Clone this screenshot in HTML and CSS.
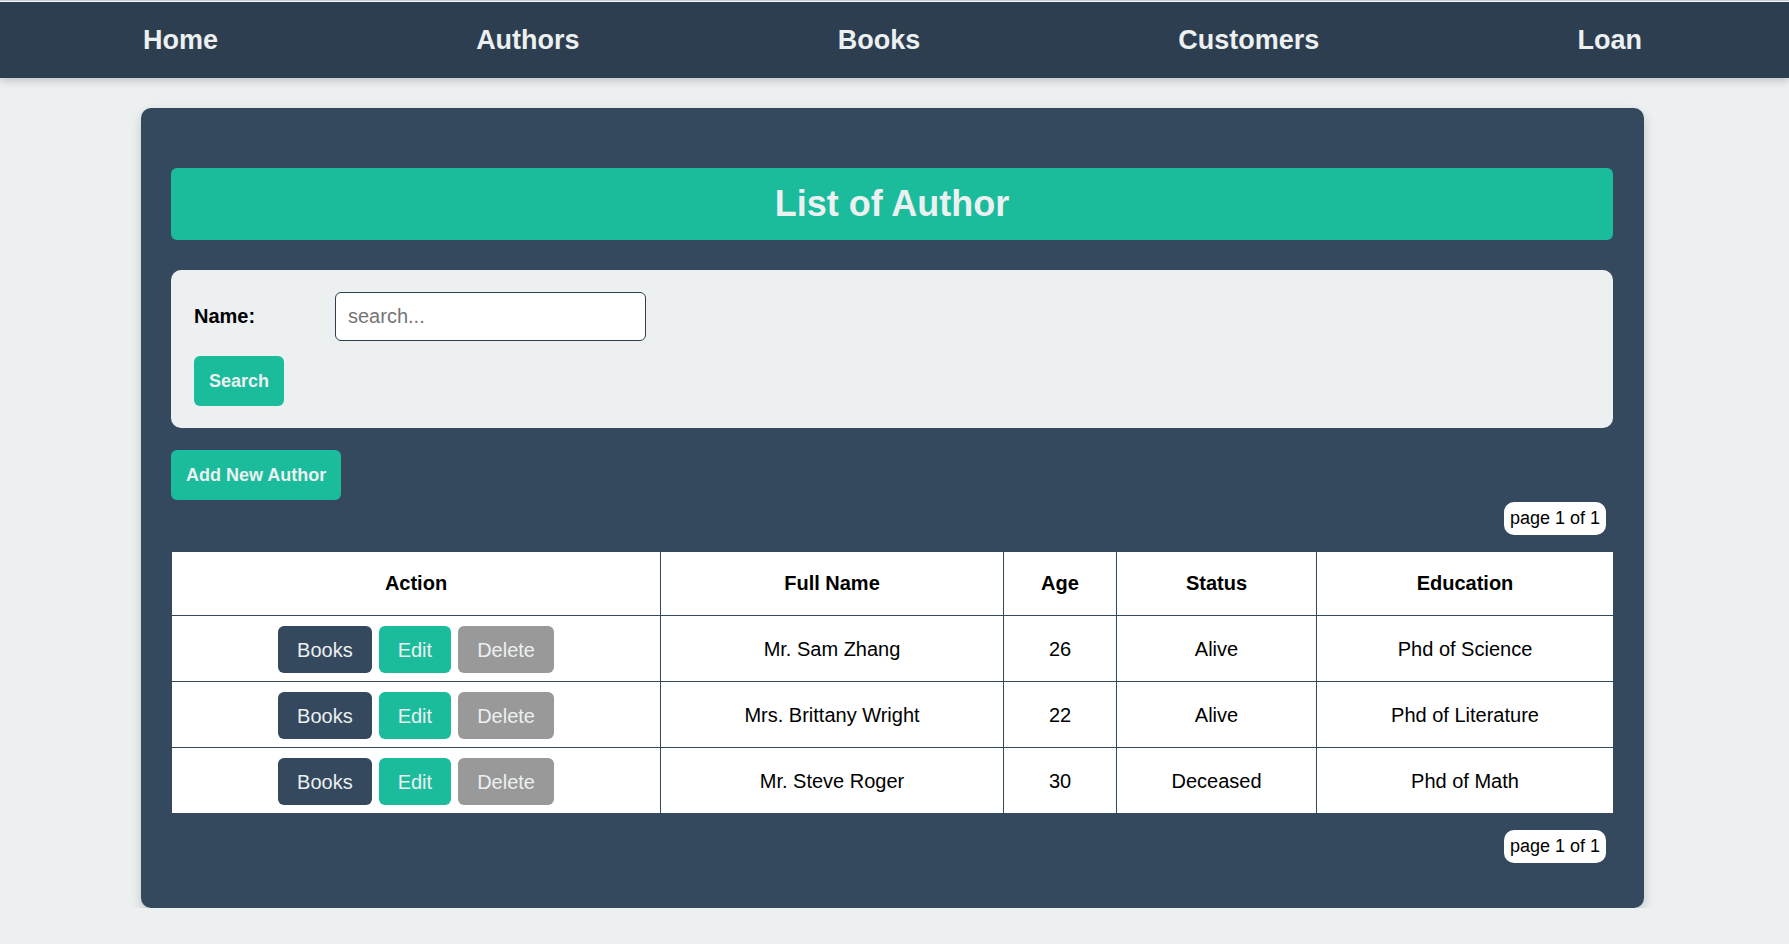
FILE: index.html
```html
<!DOCTYPE html>
<html lang="en">
<head>
<meta charset="utf-8">
<title>List of Author</title>
<link rel="stylesheet" href="styles.css">
</head>
<body>
<nav class="topnav">
  <a href="#">Home</a>
  <a href="#">Authors</a>
  <a href="#">Books</a>
  <a href="#">Customers</a>
  <a href="#">Loan</a>
</nav>
<main class="card">
  <h1 class="title">List of Author</h1>
  <form class="search-panel">
    <div class="field">
      <label class="field-label">Name:</label>
      <input class="field-input" type="text" placeholder="search...">
    </div>
    <button type="button" class="btn btn-bold btn-teal">Search</button>
  </form>
  <div class="add-row">
    <button type="button" class="btn btn-bold btn-teal">Add New Author</button>
  </div>
  <div class="pager"><span class="pager-badge">page 1 of 1</span></div>
  <table class="grid">
    <thead>
      <tr>
        <th class="c-action">Action</th>
        <th class="c-name">Full Name</th>
        <th class="c-age">Age</th>
        <th class="c-status">Status</th>
        <th class="c-edu">Education</th>
      </tr>
    </thead>
    <tbody>
      <tr>
        <td><div class="actions"><button class="btn btn-row btn-dark">Books</button><button class="btn btn-row btn-teal">Edit</button><button class="btn btn-row btn-gray">Delete</button></div></td>
        <td>Mr. Sam Zhang</td>
        <td>26</td>
        <td>Alive</td>
        <td>Phd of Science</td>
      </tr>
      <tr>
        <td><div class="actions"><button class="btn btn-row btn-dark">Books</button><button class="btn btn-row btn-teal">Edit</button><button class="btn btn-row btn-gray">Delete</button></div></td>
        <td>Mrs. Brittany Wright</td>
        <td>22</td>
        <td>Alive</td>
        <td>Phd of Literature</td>
      </tr>
      <tr>
        <td><div class="actions"><button class="btn btn-row btn-dark">Books</button><button class="btn btn-row btn-teal">Edit</button><button class="btn btn-row btn-gray">Delete</button></div></td>
        <td>Mr. Steve Roger</td>
        <td>30</td>
        <td>Deceased</td>
        <td>Phd of Math</td>
      </tr>
    </tbody>
  </table>
  <div class="pager pager-bottom"><span class="pager-badge">page 1 of 1</span></div>
</main>
</body>
</html>
```
FILE: styles.css
```css
* { box-sizing: border-box; }

html, body {
  margin: 0;
  padding: 0;
}

body {
  background: #ecf0f1;
  font-family: "Liberation Sans", Arial, sans-serif;
  color: #000;
  border-top: 1px solid #c9cdd0;
}

.topnav {
  display: flex;
  justify-content: space-around;
  align-items: center;
  height: 77px;
  padding: 0 18px 0 14px;
  background: #2c3e50;
  border-top: 1px solid #f4f6f7;
  box-shadow: 0 3px 8px rgba(0, 0, 0, 0.18);
}

.topnav a {
  color: #ecf0f1;
  text-decoration: none;
  font-weight: bold;
  font-size: 27px;
}

.card {
  width: 1503px;
  margin: 30px 0 0 141px;
  padding: 30px 31px 45px 30px;
  background: #34495e;
  border-radius: 10px;
  box-shadow: 0 5px 12px rgba(0, 0, 0, 0.18);
}

.title {
  margin: 30px 0 0;
  height: 72px;
  display: flex;
  align-items: center;
  justify-content: center;
  background: #1abc9c;
  color: #ecf0f1;
  font-size: 36px;
  font-weight: bold;
  border-radius: 6px;
}

.search-panel {
  margin: 30px 0 0;
  padding: 22px 23px;
  background: #ecf0f1;
  border-radius: 10px;
  display: flex;
  flex-direction: column;
  align-items: flex-start;
  gap: 15px;
}

.field {
  display: flex;
  align-items: center;
}

.field-label {
  width: 141px;
  font-size: 20px;
  font-weight: bold;
}

.field-input {
  width: 311px;
  height: 49px;
  padding: 0 12px;
  border: 1px solid #2c3e50;
  border-radius: 6px;
  background: #fff;
  font-family: "Liberation Sans", Arial, sans-serif;
  font-size: 20px;
  color: #000;
}

.field-input::placeholder {
  color: #757575;
}

.btn {
  border: none;
  font-family: "Liberation Sans", Arial, sans-serif;
  color: #ecf0f1;
  cursor: pointer;
}

.btn-bold {
  font-size: 18px;
  font-weight: bold;
  height: 50px;
  padding: 0 15px;
  border-radius: 6px;
}

.btn-teal { background: #1abc9c; }
.btn-dark { background: #34495e; }
.btn-gray { background: #999999; }

.add-row {
  margin-top: 22px;
}

.pager {
  display: flex;
  justify-content: flex-end;
  padding-right: 7px;
  margin-top: 2px;
}

.pager-bottom {
  margin-top: 16px;
}

.pager-badge {
  display: inline-block;
  height: 33px;
  line-height: 33px;
  padding: 0 6px;
  background: #fff;
  border-radius: 10px;
  font-size: 18px;
  color: #000;
}

.grid {
  margin-top: 16px;
  width: 100%;
  border-collapse: collapse;
  background: #fff;
  table-layout: fixed;
  font-size: 20px;
}

.grid th,
.grid td {
  border: 1px solid #34495e;
  text-align: center;
  padding: 0 8px;
}

.grid th {
  height: 64px;
  font-weight: bold;
}

.grid td {
  height: 66px;
  padding-top: 2px;
}

.c-action { width: 489px; }
.c-name { width: 343px; }
.c-age { width: 113px; }
.c-status { width: 200px; }
.c-edu { width: 297px; }

.actions {
  display: flex;
  justify-content: center;
  gap: 7px;
}

.btn-row {
  height: 47px;
  padding: 2px 19px 0;
  font-size: 20px;
  border-radius: 6px;
}
```
